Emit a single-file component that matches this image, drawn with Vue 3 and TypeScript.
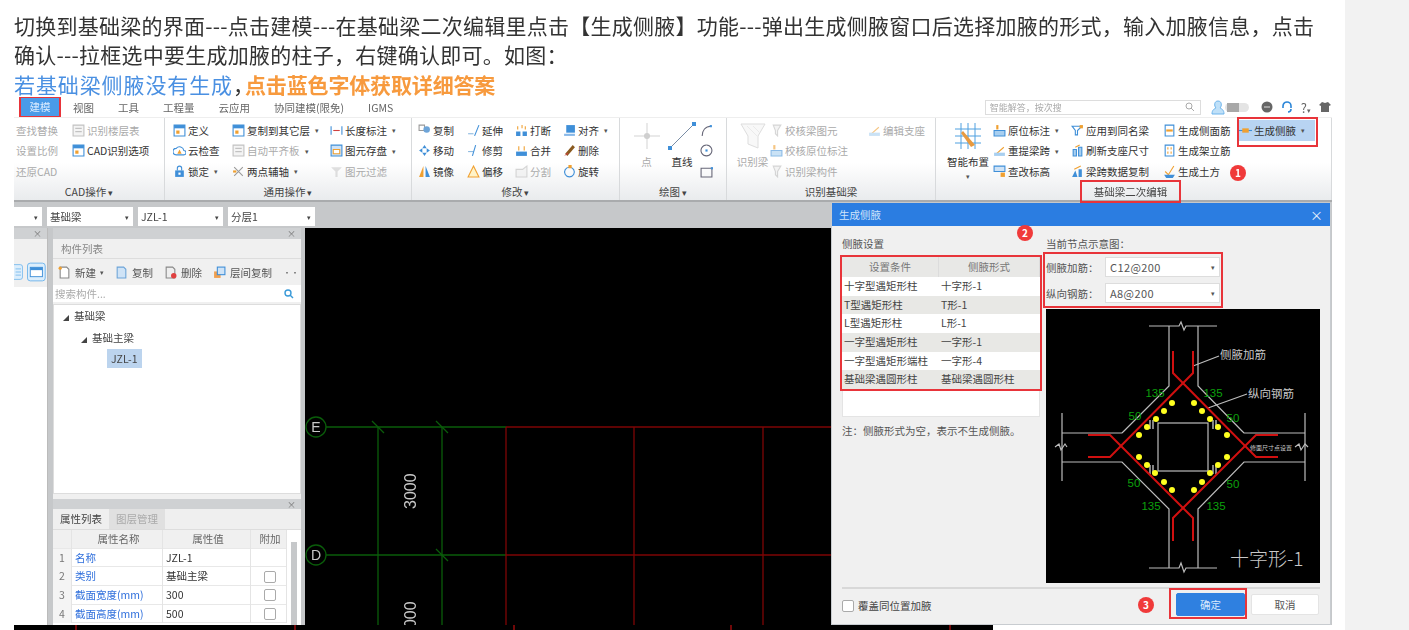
<template>
  <div class="page">
    <main class="article">
      <div class="copy">
        <p>切换到基础梁的界面---点击建模---在基础梁二次编辑里点击【生成侧腋】功能---弹出生成侧腋窗口后选择加腋的形式，输入加腋信息，点击</p>
        <p>确认---拉框选中要生成加腋的柱子，右键确认即可。如图：</p>
        <p><span class="link">若基础梁侧腋没有生成</span><span class="comma">，</span><b class="hint">点击蓝色字体获取详细答案</b></p>
      </div>

      <div class="shot">
        <!-- 顶部菜单 -->
        <div class="menu">
          <span v-for="tab in tabs" :key="tab" class="tab" :class="{ on: tab === '建模' }">{{ tab }}</span>
          <div class="tools">
            <div class="search-top">
              <span>智能解答，按次搜</span>
              <svg viewBox="0 0 10 10" class="i10"><circle cx="4" cy="4" r="3" fill="none" stroke="#aaa" /><path d="M6 6l3 3" stroke="#aaa" /></svg>
            </div>
            <svg viewBox="0 0 44 16" class="avatar">
              <path d="M3 15c0-4 2-5 4-6-2-2-2-7 2-7s4 5 2 7c2 1 4 2 4 6z" fill="#bfe0f8" stroke="#6db4ec" />
              <rect x="16" y="4" width="24" height="9" rx="4.5" fill="#e4e4e4" />
              <rect x="18" y="4" width="12" height="9" fill="#a8a8a8" />
            </svg>
            <svg viewBox="0 0 12 12" class="i12"><circle cx="6" cy="6" r="5.5" fill="#666" /><path d="M3 6h6" stroke="#ddd" /></svg>
            <svg viewBox="0 0 12 12" class="i12"><path d="M2 7V5a4 4 0 0 1 8 0v2M7 11c2 0 3-1 3-3" fill="none" stroke="#2c86d8" stroke-width="1.6" /></svg>
            <span class="qm">?<small>▾</small></span>
            <svg viewBox="0 0 12 12" class="i12"><path d="M3 1l3 1 3-1 3 3-2 1v6H2V5L0 4z" fill="#666" /></svg>
          </div>
        </div>

        <!-- 功能区 -->
        <div class="ribbon">
          <section v-for="group in groups" :key="group.name" class="group" :style="{ width: group.w + 'px' }">
            <div class="cols" :style="{ paddingLeft: group.pad + 'px' }">
              <div v-for="(col, ci) in group.cols" :key="ci" class="col" :style="{ width: col.w + 'px' }">
                <template v-if="col.big">
                  <div class="big" :class="{ off: col.off }">
                    <svg viewBox="0 0 30 30" class="big-ic">
                      <path v-for="(p, pi) in bigIcons[col.big]" :key="pi" :d="p.d" :fill="p.fill" :stroke="p.stroke" />
                    </svg>
                    <span>{{ col.label }}</span>
                    <small v-if="col.arrow">▾</small>
                  </div>
                </template>
                <template v-else>
                  <div v-for="item in col.items" :key="item.t" class="item" :class="{ off: item.off, cur: item.cur }">
                    <svg v-if="item.i" viewBox="0 0 12 12" class="i13">
                      <path v-for="(p, pi) in icons[item.i]" :key="pi" :d="p.d" :fill="p.fill" :stroke="p.stroke" />
                    </svg>
                    <span>{{ item.t }}</span>
                    <small v-if="item.a">▾</small>
                  </div>
                </template>
              </div>
            </div>
            <div class="glabel" :class="{ marked: group.marked }">{{ group.name }}<small v-if="!group.noArrow"> ▾</small></div>
          </section>
          <span class="red-box cur-box"></span>
          <span class="badge b1">1</span>
        </div>

        <!-- 下拉条 -->
        <div class="combos">
          <div v-for="c in combos" :key="c.t" class="combo" :style="{ width: c.w + 'px' }">
            <span>{{ c.t }}</span><small>▾</small>
          </div>
        </div>

        <div class="work">
          <aside class="side-left">
            <div class="bar"><i>×</i></div>
            <div class="left-tools">
              <svg viewBox="0 0 12 20" class="mode"><rect x="-8" y=".5" width="19" height="19" rx="3" fill="#dceefc" stroke="#6db4ec" /><path d="M2 6h7M2 10h7M2 14h7" stroke="#6db4ec" /></svg>
              <svg viewBox="0 0 20 20" class="mode wide"><rect x=".5" y=".5" width="19" height="19" rx="3" fill="#dceefc" stroke="#6db4ec" /><rect x="3.5" y="5" width="13" height="10" fill="#fff" stroke="#3f8fd8" /><path d="M3.5 5h13v3h-13z" fill="#3f8fd8" /></svg>
            </div>
          </aside>

          <div class="side-mid">
            <div class="bar"><i>×</i></div>
            <div class="ptitle">构件列表</div>
            <div class="ptools">
              <span><svg viewBox="0 0 12 12" class="i13"><path d="M2 1h6l2 2v8H2z" fill="#fff" stroke="#888" /><circle cx="2" cy="2" r="1.5" fill="#f0a030" /></svg>新建 <small>▾</small></span>
              <span><svg viewBox="0 0 12 12" class="i13"><path d="M2 1h6l2 2v8H2z" fill="#cfe3f6" stroke="#6da4d8" /></svg>复制</span>
              <span><svg viewBox="0 0 12 12" class="i13"><path d="M2 1h6l2 2v8H2z" fill="#eee" stroke="#888" /><circle cx="9" cy="9" r="2.5" fill="#e04040" /></svg>删除</span>
              <span><svg viewBox="0 0 12 12" class="i13"><rect x="1" y="5" width="6" height="6" fill="#f0a050" /><rect x="4" y="1" width="7" height="7" fill="#cfe3f6" stroke="#3f8fd8" /></svg>层间复制</span>
              <em>••</em>
            </div>
            <div class="psearch">
              <span>搜索构件...</span>
              <svg viewBox="0 0 10 10" class="i10"><circle cx="4" cy="4" r="3" fill="none" stroke="#3a9ad8" stroke-width="1.4" /><path d="M6 6l3 3" stroke="#3a9ad8" stroke-width="1.4" /></svg>
            </div>
            <div class="tree">
              <div class="node"><b>◢</b>基础梁</div>
              <div class="node n2"><b>◢</b>基础主梁</div>
              <div class="node n3"><span>JZL-1</span></div>
            </div>
            <div class="bar second"><i>×</i></div>
            <div class="ptabs"><span class="active">属性列表</span><span>图层管理</span></div>
            <div class="props">
              <div class="prow phead"><span></span><span>属性名称</span><span>属性值</span><span>附加</span></div>
              <div v-for="p in props" :key="p.n" class="prow">
                <span class="num">{{ p.n }}</span>
                <span class="pname">{{ p.k }}</span>
                <span class="pval">{{ p.v }}</span>
                <span class="pchk"><i v-if="p.c" class="chk"></i></span>
              </div>
              <span class="vscroll"></span>
            </div>
          </div>

          <!-- 绘图区 -->
          <svg class="canvas" viewBox="305 228 526 397">
            <g fill="none" stroke="#0a5c0a" stroke-width="1.3">
              <circle cx="316" cy="427" r="10" />
              <circle cx="316" cy="555" r="10" />
              <path d="M326 427H506M326 555H506M378 427V625M442 427V625" />
              <path d="M372 421l12 12M436 421l12 12M436 549l12 12" />
            </g>
            <g fill="none" stroke="#7d0505" stroke-width="1.3">
              <path d="M506 427H831M506 555H831M506 427V625M634 427V625M763 427V625" />
            </g>
            <g fill="#c8c8c8" font-family="'Liberation Sans', sans-serif">
              <text x="316" y="432" font-size="14" text-anchor="middle">E</text>
              <text x="316" y="560" font-size="14" text-anchor="middle">D</text>
              <text transform="translate(416 509) rotate(-90)" font-size="16">3000</text>
              <text transform="translate(416 637) rotate(-90)" font-size="16">3000</text>
            </g>
          </svg>
        </div>

        <svg class="band" viewBox="14 625 979 5">
          <rect x="14" y="625" width="979" height="5" fill="#000" />
          <path d="M76 625v5M295 625v5M514 625v5M731 625v5M950 625v5" stroke="#e01010" />
        </svg>

        <!-- 生成侧腋弹窗 -->
        <div class="dialog">
          <header class="dlg-title"><span>生成侧腋</span><i>×</i></header>
          <div class="dlg-body">
            <div class="dlg-left">
              <h4>侧腋设置</h4>
              <div class="rule-table">
                <div class="trow thead"><span>设置条件</span><span>侧腋形式</span></div>
                <div v-for="r in rules" :key="r[0]" class="trow"><span>{{ r[0] }}</span><span>{{ r[1] }}</span></div>
              </div>
              <div class="table-rest"></div>
              <p class="note">注：侧腋形式为空，表示不生成侧腋。</p>
            </div>
            <div class="dlg-right">
              <h4>当前节点示意图：</h4>
              <div class="fields">
                <div class="field"><label>侧腋加筋：</label><div class="dcombo"><span>C12@200</span><small>▾</small></div></div>
                <div class="field"><label>纵向钢筋：</label><div class="dcombo"><span>A8@200</span><small>▾</small></div></div>
              </div>
              <svg class="diagram" viewBox="1046 308 274 274">
                <rect x="1046" y="308" width="274" height="274" fill="#000" />
                <g fill="none" stroke="#bcbcbc" stroke-width="1.2">
                  <path d="M1149 325H1179l2-4 3 8 2-4H1217" />
                  <path d="M1169 325V385L1124 430 1122 432H1062M1198 325V385L1242 430 1244 432H1305" />
                  <path d="M1062 412V480M1305 412V480" />
                  <path d="M1062 461H1122L1169 508V567M1305 461H1244L1198 508V567" />
                  <path d="M1149 567H1179l2-5 3 9 2-4H1217" />
                  <path d="M1055 446l4-3 2 6 4-6 2 3M1295 446l4-3 2 6 4-6 3 3" />
                  <rect x="1158" y="422" width="50" height="48" />
                  <path d="M1150 419v9M1153 419v9M1213 419v9M1216 419v9M1150 464v9M1153 464v9M1213 464v9M1216 464v9" stroke="#ddd" />
                  <path d="M1193 365L1219 355M1208 407L1247 393" />
                </g>
                <g fill="none" stroke="#d01010" stroke-width="2">
                  <path d="M1173 350V372L1256 456H1278" />
                  <path d="M1193 350V372L1110 456H1088" />
                  <path d="M1173 540V517L1256 434H1278" />
                  <path d="M1193 540V517L1110 434H1088" />
                </g>
                <circle v-for="(d, di) in dots" :key="di" :cx="d[0]" :cy="d[1]" r="3" fill="#ffff20" />
                <g fill="#0ca00c" font-size="11.5" font-family="'Liberation Sans', sans-serif">
                  <text v-for="(g, gi) in greens" :key="gi" :x="g[0]" :y="g[1]" text-anchor="middle">{{ g[2] }}</text>
                </g>
                <g fill="#c8c8c8" font-family="'Noto Sans CJK SC', sans-serif">
                  <text x="1220" y="358" font-size="11.5">侧腋加筋</text>
                  <text x="1248" y="397" font-size="11.5">纵向钢筋</text>
                  <text x="1250" y="449" font-size="6">修面尺寸点设置</text>
                </g>
                <text x="1230" y="565" fill="#c8c8c8" font-size="19" font-weight="300" font-family="'Noto Sans CJK SC', sans-serif">十字形-1</text>
              </svg>
            </div>
          </div>
          <footer class="dlg-foot">
            <label class="cover"><i class="chk"></i>覆盖同位置加腋</label>
            <span class="badge b3">3</span>
            <span class="ok-wrap"><button class="btn primary">确定</button></span>
            <button class="btn cancel">取消</button>
          </footer>
          <span class="badge b2">2</span>
        </div>
      </div>
    </main>
    <div class="rail"></div>
  </div>
</template>

<script setup lang="ts">
interface P {
  d: string;
  fill?: string;
  stroke?: string;
}
interface Item {
  t: string;
  i?: string;
  a?: boolean;
  off?: boolean;
  cur?: boolean;
}
interface Col {
  w: number;
  items?: Item[];
  big?: string;
  label?: string;
  arrow?: boolean;
  off?: boolean;
}
interface Group {
  name: string;
  w: number;
  pad: number;
  cols: Col[];
  marked?: boolean;
  noArrow?: boolean;
}

const tabs = ["建模", "视图", "工具", "工程量", "云应用", "协同建模(限免)", "IGMS"];

const B = "#3f8fd8";
const O = "#f0a030";
const G = "#9a9a9a";

// 工具栏小图标
const icons: Record<string, P[]> = {
  table: [{ d: "M1 1h10v10H1z", fill: "#fff", stroke: B }, { d: "M1 1h10v3H1z", fill: B }, { d: "M3 6h3v3H3z", fill: O }],
  gray: [{ d: "M1 1h10v10H1z", fill: "#eee", stroke: G }, { d: "M3 4h6M3 7h6", stroke: G }],
  cloud: [{ d: "M3 10a3 3 0 0 1 0-6 4 4 0 0 1 7 2 2 2 0 0 1 0 4z", fill: "#fff", stroke: B }, { d: "M6 5l2 4H4z", fill: O }],
  lock: [{ d: "M2 5h8v6H2z", fill: B }, { d: "M4 5V3a2 2 0 0 1 4 0v2", fill: "none", stroke: B }, { d: "M5 7h2v2H5z", fill: "#fff" }],
  axis: [{ d: "M2 2l8 8M2 10l8-8", stroke: G }, { d: "M1 5h3v2H1z", fill: O }],
  dim: [{ d: "M1 2v8M11 2v8", stroke: B }, { d: "M3 6h6", stroke: "#d04040" }],
  save: [{ d: "M1 1h10v10H1z", fill: "#cfe3f6", stroke: B }, { d: "M3 5h6v4H3z", fill: "#fff", stroke: O }],
  filter: [{ d: "M1 2h10L7 6v5H5V6z", fill: "#ccc" }],
  copy: [{ d: "M1 1h5v5H1z", fill: "none", stroke: G }, { d: "M5 5a3 3 0 1 0 6 0 3 3 0 1 0-6 0z", fill: "#6da4d8" }],
  ext: [{ d: "M1 9h5", stroke: "#8ab8e0", fill: "none" }, { d: "M7 11l4-10", stroke: B, fill: "none" }],
  brk: [{ d: "M1 7h4v4H1zM7 7h4v4H7z", fill: B }, { d: "M2 2h1v3H2zM6 1h1v3H6zM9 2h1v3H9z", fill: O }],
  align: [{ d: "M3 1h8v7H3z", fill: B }, { d: "M1 9h10v2H1z", fill: "#88b8e8" }],
  move: [{ d: "M6 1l2 3H4zM6 11L4 8h4zM1 6l3-2v4zM11 6L8 8V4z", fill: B }],
  trim: [{ d: "M1 7h5", stroke: "#8ab8e0", fill: "none" }, { d: "M5 11l3-10", stroke: B, fill: "none" }],
  merge: [{ d: "M1 7h10v4H1z", fill: B }, { d: "M3 2h1v4H3zM8 2h1v4H8z", fill: O }],
  del: [{ d: "M2 9l7-8 2 2-7 8z", fill: "#8a5a20" }, { d: "M1 11l3-3 1 1z", fill: "#d04040" }],
  mirror: [{ d: "M5 1v10H1z", fill: O }, { d: "M7 1v10h4z", fill: B }],
  offset: [{ d: "M6 1l5 10H1z", fill: "#fff3c8", stroke: O }],
  split: [{ d: "M1 11V4h6l4-3v10z", fill: "#eee", stroke: "#bbb" }],
  rotate: [{ d: "M6 2a4.5 4.5 0 1 1-.1 0", fill: "none", stroke: B }, { d: "M5 0h3v3H5z", fill: O }],
  chk: [{ d: "M3 1h7L7 6v5L5 9V6z", fill: "#eee", stroke: "#bbb" }],
  mark: [{ d: "M3 1h2v4H3z", fill: O }, { d: "M1 6h10v5H1z", fill: "#a8cff0", stroke: B }],
  line: [{ d: "M2 10L10 3", stroke: O, fill: "none" }, { d: "M1 8h10v3H1z", fill: "#a8cff0" }],
  level: [{ d: "M1 1h10v5H1z", fill: "#cfe3f6", stroke: B }, { d: "M7 7h4v4H7z", fill: O }],
  same: [{ d: "M1 2h9L6 6v4H4V6z", fill: "#fff", stroke: B }, { d: "M8 1h3v3H8z", fill: O }],
  brush: [{ d: "M2 11V5h3v6zM7 11V3h3v8z", fill: "#a8cff0", stroke: B }, { d: "M4 3l4-2", stroke: O }],
  cp: [{ d: "M1 11l3-6 2 6zM7 11V4h3v7z", fill: B }, { d: "M3 4l6-3", stroke: O, fill: "none" }],
  side: [{ d: "M2 1h8v10H2z", fill: "#fff", stroke: B }, { d: "M3 5h6v2H3z", fill: O }],
  erect: [{ d: "M2 1h8v10H2z", fill: "#fff", stroke: B }, { d: "M4 3h1v2H4zM7 3h1v2H7zM4 7h1v2H4zM7 7h1v2H7z", fill: O }],
  earth: [{ d: "M2 6l3 3 5-8", stroke: O, fill: "none" }, { d: "M1 9h10l-2 3H3z", fill: B }],
  haunch: [{ d: "M0 6h12", stroke: B, fill: "none" }, { d: "M3 4h6v4H3z", fill: O }],
  arc: [{ d: "M2 11C2 6 5 2 10 2", fill: "none", stroke: "#667" }, { d: "M9 1h2v2H9z", fill: B }],
  circle: [{ d: "M6 1a5 5 0 1 1-.1 0", fill: "none", stroke: "#667" }, { d: "M5 5h2v2H5z", fill: B }],
  rect: [{ d: "M1 3h10v8H1z", fill: "none", stroke: "#667" }, { d: "M10 2h2v2h-2z", fill: B }],
};

const bigIcons: Record<string, P[]> = {
  point: [{ d: "M15 2v26M2 15h26", stroke: "#b8b8b8", fill: "none" }, { d: "M12 15a3 3 0 1 0 6 0 3 3 0 1 0-6 0z", fill: "#b0b0b0" }],
  line: [{ d: "M3 27L27 3", stroke: "#7a8da5", fill: "none" }, { d: "M1 25h4v4H1zM25 1h4v4h-4z", fill: B }],
  funnel: [{ d: "M3 3h24l-7 12v12l-10-4V15z", fill: "#f4f4f4", stroke: "#c8c8c8" }, { d: "M9 5l10 10M15 5l6 6", stroke: "#ddd" }],
  smart: [{ d: "M8 2v26M15 2v26M22 2v26M2 8h26M2 15h26M2 22h26", stroke: "#4fa0e0", fill: "none" }, { d: "M10 10l12 14-4 2L8 12z", fill: "#e89a40" }],
};

const groups: Group[] = [
  {
    name: "CAD操作",
    w: 151,
    pad: 2,
    cols: [
      { w: 56, items: [{ t: "查找替换", off: true }, { t: "设置比例", off: true }, { t: "还原CAD", off: true }] },
      { w: 90, items: [{ t: "识别楼层表", i: "gray", off: true }, { t: "CAD识别选项", i: "table" }] },
    ],
  },
  {
    name: "通用操作",
    w: 247,
    pad: 8,
    cols: [
      { w: 59, items: [{ t: "定义", i: "table" }, { t: "云检查", i: "cloud" }, { t: "锁定", i: "lock", a: true }] },
      { w: 98, items: [{ t: "复制到其它层", i: "table", a: true }, { t: "自动平齐板", i: "gray", a: true, off: true }, { t: "两点辅轴", i: "axis", a: true }] },
      { w: 80, items: [{ t: "长度标注", i: "dim", a: true }, { t: "图元存盘", i: "save", a: true }, { t: "图元过滤", i: "filter", off: true }] },
    ],
  },
  {
    name: "修改",
    w: 208,
    pad: 6,
    cols: [
      { w: 49, items: [{ t: "复制", i: "copy" }, { t: "移动", i: "move" }, { t: "镜像", i: "mirror" }] },
      { w: 48, items: [{ t: "延伸", i: "ext" }, { t: "修剪", i: "trim" }, { t: "偏移", i: "offset" }] },
      { w: 48, items: [{ t: "打断", i: "brk" }, { t: "合并", i: "merge" }, { t: "分割", i: "split", off: true }] },
      { w: 55, items: [{ t: "对齐", i: "align", a: true }, { t: "删除", i: "del" }, { t: "旋转", i: "rotate" }] },
    ],
  },
  {
    name: "绘图",
    w: 107,
    pad: 9,
    cols: [
      { w: 35, big: "point", label: "点", off: true },
      { w: 36, big: "line", label: "直线" },
      { w: 20, items: [{ t: "", i: "arc" }, { t: " ", i: "circle" }, { t: "  ", i: "rect" }] },
    ],
  },
  {
    name: "识别基础梁",
    w: 209,
    pad: 8,
    noArrow: true,
    cols: [
      { w: 35, big: "funnel", label: "识别梁", off: true },
      { w: 98, items: [{ t: "校核梁图元", i: "chk", off: true }, { t: "校核原位标注", i: "mark", off: true }, { t: "识别梁构件", i: "chk", off: true }] },
      { w: 60, items: [{ t: "编辑支座", i: "line", off: true }] },
    ],
  },
  {
    name: "基础梁二次编辑",
    w: 396,
    pad: 7,
    marked: true,
    noArrow: true,
    cols: [
      { w: 50, big: "smart", label: "智能布置", arrow: true },
      { w: 78, items: [{ t: "原位标注", i: "mark", a: true }, { t: "重提梁跨", i: "line", a: true }, { t: "查改标高", i: "level" }] },
      { w: 92, items: [{ t: "应用到同名梁", i: "same" }, { t: "刷新支座尺寸", i: "brush" }, { t: "梁跨数据复制", i: "cp" }] },
      { w: 77, items: [{ t: "生成侧面筋", i: "side" }, { t: "生成架立筋", i: "erect" }, { t: "生成土方", i: "earth" }] },
      { w: 78, items: [{ t: "生成侧腋", i: "haunch", a: true, cur: true }] },
    ],
  },
];

const combos = [
  { t: " ", w: 28 },
  { t: "基础梁", w: 86 },
  { t: "JZL-1", w: 85 },
  { t: "分层1", w: 87 },
];

const props = [
  { n: 1, k: "名称", v: "JZL-1", c: false },
  { n: 2, k: "类别", v: "基础主梁", c: true },
  { n: 3, k: "截面宽度(mm)", v: "300", c: true },
  { n: 4, k: "截面高度(mm)", v: "500", c: true },
];

const rules = [
  ["十字型遇矩形柱", "十字形-1"],
  ["T型遇矩形柱", "T形-1"],
  ["L型遇矩形柱", "L形-1"],
  ["一字型遇矩形柱", "一字形-1"],
  ["一字型遇矩形端柱", "一字形-4"],
  ["基础梁遇圆形柱", "基础梁遇圆形柱"],
];

const dots = [
  [1172, 402], [1164, 410], [1156, 418], [1147, 426], [1139, 434],
  [1194, 402], [1202, 410], [1210, 418], [1218, 426], [1227, 434],
  [1139, 456], [1147, 464], [1155, 472], [1164, 481], [1172, 489],
  [1227, 456], [1218, 464], [1210, 472], [1202, 481], [1194, 489],
];

const greens: [number, number, string][] = [
  [1155, 396, "135"], [1213, 396, "135"],
  [1135, 419, "50"], [1233, 421, "50"],
  [1134, 486, "50"], [1233, 487, "50"],
  [1151, 509, "135"], [1216, 509, "135"],
];
</script>

<style>
html,
body {
  background: #fff;
}
</style>

<style scoped>
.page {
  display: flex;
  width: 1409px;
  height: 630px;
  overflow: hidden;
  background: #fff;
  font-family: "Noto Sans CJK SC", "Liberation Sans", sans-serif;
  color: #333;
}
.article {
  width: 1345px;
  flex: none;
}
.rail {
  flex: 1;
  background: #f2f2f2;
}
.copy {
  height: 97px;
  padding: 11px 0 0 14px;
  box-sizing: border-box;
  font-size: 21px;
  letter-spacing: 0.25px;
  line-height: 29.3px;
  filter: blur(0.5px);
  white-space: nowrap;
}
.copy p {
  margin: 0;
}
.link {
  color: #4a90e2;
  letter-spacing: 0.9px;
}
.comma {
  letter-spacing: -9px;
}
.hint {
  color: #f79a3e;
  letter-spacing: -0.15px;
}

/* 截图区，原图本身是模糊的 */
.shot {
  position: relative;
  width: 1318px;
  height: 533px;
  margin-left: 14px;
  overflow: hidden;
  font-size: 10.5px;
  filter: blur(0.7px);
}
.menu {
  display: flex;
  align-items: center;
  height: 20px;
  padding-left: 6px;
  color: #666;
  background: #fff;
}
.tab {
  margin-right: 24px;
  white-space: nowrap;
}
.tab.on {
  width: 40px;
  height: 20px;
  margin-right: 13px;
  line-height: 20px;
  text-align: center;
  color: #dcecff;
  background: #4a9be8;
  outline: 2px solid #e8343a;
  outline-offset: -1px;
}
.tools {
  display: flex;
  align-items: center;
  gap: 8px;
  margin-left: auto;
  margin-right: 1px;
}
.search-top {
  display: flex;
  align-items: center;
  justify-content: space-between;
  width: 216px;
  height: 15px;
  padding: 0 5px 0 4px;
  box-sizing: border-box;
  border: 1px solid #ddd;
  color: #aaa;
  font-size: 9px;
}
.i10 {
  width: 10px;
  height: 10px;
  flex: none;
}
.i12 {
  width: 12px;
  height: 12px;
  flex: none;
}
.i13 {
  width: 13px;
  height: 13px;
  flex: none;
}
.avatar {
  width: 44px;
  height: 16px;
}
.qm {
  color: #666;
  font-size: 13px;
}
.qm small {
  font-size: 7px;
}
.ribbon {
  position: relative;
  display: flex;
  height: 85px;
  background: linear-gradient(#fff 55%, #e9ebed);
  border-top: 1px solid #eee;
  border-bottom: 2px solid #a9abad;
  box-sizing: border-box;
}
.group {
  display: flex;
  flex-direction: column;
  flex: none;
  box-sizing: border-box;
  border-right: 1px solid #d8dadc;
}
.cols {
  display: flex;
  height: 64px;
  padding-top: 2px;
}
.col {
  flex: none;
}
.item {
  display: flex;
  align-items: center;
  gap: 2px;
  height: 20.5px;
  white-space: nowrap;
  color: #333;
}
.item small,
.big small {
  font-size: 7px;
  margin-left: 3px;
  color: #555;
}
.off {
  color: #aaa;
}
.off svg {
  opacity: 0.6;
}
.item.off {
  color: #aaa;
}
.item.cur {
  width: 76px;
  margin-left: -1px;
  background: #b8d4f2;
}
.big {
  display: flex;
  flex-direction: column;
  align-items: center;
  line-height: 14px;
}
.big.off {
  color: #aaa;
}
.big-ic {
  width: 30px;
  height: 30px;
  margin: 1px 0 4px;
}
.big small {
  margin: 0;
}
.glabel {
  height: 17px;
  line-height: 17px;
  text-align: center;
  color: #444;
}
.glabel.marked {
  width: 99px;
  height: 21px;
  margin: -2px 0 0 145px;
  line-height: 21px;
  outline: 2px solid #e8343a;
  outline-offset: -1px;
  position: relative;
  z-index: 2;
}
.red-box {
  position: absolute;
  outline: 2px solid #e8343a;
  outline-offset: -1px;
  pointer-events: none;
}
.cur-box {
  left: 1224px;
  top: 0;
  width: 79px;
  height: 28px;
}
.badge {
  position: absolute;
  width: 16px;
  height: 16px;
  line-height: 16px;
  border-radius: 50%;
  text-align: center;
  font-size: 10px;
  font-weight: 700;
  color: #fff;
  background: #f03a3a;
  z-index: 3;
}
.b1 {
  left: 1216px;
  top: 47px;
}
.combos {
  display: flex;
  gap: 5px;
  height: 26px;
  padding-top: 5px;
  box-sizing: border-box;
  background: #c6c8ca;
}
.combo {
  display: flex;
  align-items: center;
  justify-content: space-between;
  height: 19px;
  padding: 0 4px 0 3px;
  box-sizing: border-box;
  background: #fff;
  color: #444;
}
.combo small {
  font-size: 7px;
}
.work {
  display: flex;
  height: 397px;
  background: #c6c8ca;
}
.side-left {
  width: 34px;
  flex: none;
  background: #fff;
  border-right: 1px solid #bbb;
  box-sizing: border-box;
}
.bar {
  display: flex;
  justify-content: flex-end;
  align-items: center;
  height: 11px;
  padding-right: 5px;
  background: #cfd1d3;
  color: #777;
  font-size: 9px;
}
.bar i {
  font-style: normal;
}
.left-tools {
  display: flex;
  justify-content: flex-end;
  gap: 4px;
  height: 48px;
  padding: 23px 1px 0 0;
  box-sizing: border-box;
  background: #f0f0f0;
}
.mode {
  width: 10px;
  height: 20px;
}
.mode.wide {
  width: 20px;
}
.side-mid {
  width: 248px;
  flex: none;
  margin: 0 4px 0 5px;
  background: #f0f0f0;
  display: flex;
  flex-direction: column;
}
.ptitle {
  height: 19px;
  line-height: 19px;
  padding-left: 8px;
  color: #888;
  border-bottom: 1px solid #ddd;
}
.ptools {
  display: flex;
  align-items: center;
  gap: 11px;
  height: 26px;
  padding-left: 5px;
  color: #555;
  white-space: nowrap;
}
.ptools span {
  display: flex;
  align-items: center;
  gap: 4px;
}
.ptools small {
  font-size: 7px;
}
.ptools em {
  margin-left: auto;
  margin-right: 3px;
  font-size: 8px;
  font-style: normal;
}
.psearch {
  display: flex;
  justify-content: space-between;
  align-items: center;
  height: 17px;
  padding: 0 7px 0 2px;
  background: #fff;
  color: #aaa;
}
.tree {
  height: 190px;
  margin-top: 2px;
  background: #fff;
  border: 1px solid #ddd;
  box-sizing: border-box;
  color: #444;
}
.node {
  height: 21.5px;
  line-height: 21.5px;
  padding-left: 9px;
}
.node b {
  font-size: 6px;
  margin-right: 5px;
  color: #444;
}
.n2 {
  padding-left: 27px;
}
.n3 {
  padding-left: 53px;
}
.n3 span {
  display: inline-block;
  height: 19px;
  line-height: 19px;
  padding: 0 4px;
  background: #bcd4ee;
}
.second {
  margin-top: 5px;
  height: 10px;
}
.ptabs {
  display: flex;
  height: 20px;
  background: #efefef;
  border-bottom: 1px solid #ddd;
}
.ptabs span {
  padding: 0 7px;
  line-height: 20px;
  background: #e0e0e0;
  color: #aaa;
}
.ptabs .active {
  background: #efefef;
  color: #444;
}
.props {
  position: relative;
  flex: 1;
  background: #fff;
  overflow: hidden;
  padding-right: 14px;
}
.prow {
  display: grid;
  grid-template-columns: 19px 91px 88px 36px;
  height: 18.7px;
  line-height: 18.7px;
  border-bottom: 1px solid #e8e8e8;
  box-sizing: border-box;
}
.prow > span {
  border-right: 1px solid #e4e4e4;
  padding-left: 3px;
  white-space: nowrap;
}
.phead {
  background: #f0f0f0;
  color: #666;
}
.phead > span {
  text-align: center;
}
.num {
  color: #777;
  background: #f4f4f4;
  padding-left: 6px !important;
}
.pname {
  color: #2f6fdc;
}
.pchk {
  display: flex;
  justify-content: center;
  align-items: center;
}
.chk {
  display: inline-block;
  width: 12px;
  height: 12px;
  box-sizing: border-box;
  border: 1px solid #aaa;
  border-radius: 2px;
  background: #fff;
}
.vscroll {
  position: absolute;
  top: 12px;
  right: 4px;
  bottom: 0;
  width: 6px;
  background: #c6c8ca;
}
.canvas {
  display: block;
  width: 526px;
  height: 397px;
  flex: none;
  background: #000;
}
.band {
  display: block;
  width: 979px;
  height: 5px;
}

/* 弹窗 */
.dialog {
  position: absolute;
  left: 817px;
  top: 106px;
  width: 500px;
  height: 422px;
  display: flex;
  flex-direction: column;
  box-sizing: border-box;
  background: #f0f0f0;
  color: #444;
  border: 1px solid #c8ccd0;
  border-top: 0;
  z-index: 4;
}
.dlg-title {
  display: flex;
  justify-content: space-between;
  align-items: center;
  height: 23px;
  flex: none;
  padding: 0 7px;
  background: #2b7de1;
  color: #cfe4fb;
}
.dlg-title i {
  font-style: normal;
  font-size: 13px;
  color: #e8f2fd;
}
.dlg-body {
  display: flex;
  gap: 6px;
  flex: 1;
  padding: 10px 10px 0;
}
.dlg-body h4 {
  margin: 0;
  height: 19px;
  line-height: 16px;
  font-weight: 400;
  font-size: 10.5px;
  color: #555;
}
.dlg-left {
  width: 198px;
  flex: none;
}
.rule-table {
  margin-top: 2px;
  background: #fff;
  outline: 2px solid #e8343a;
}
.trow {
  display: grid;
  grid-template-columns: 97px 1fr;
  height: 18.7px;
  line-height: 18.7px;
}
.trow > span {
  padding-left: 2px;
  white-space: nowrap;
}
.trow:nth-child(odd):not(.thead) {
  background: #e8e8e5;
}
.thead {
  height: 20px;
  line-height: 20px;
  background: #e8e8e6;
  color: #777;
}
.thead > span {
  text-align: center;
  padding: 0;
  border-right: 1px solid #dcdcdc;
}
.table-rest {
  height: 27px;
  margin-top: 1px;
  background: #fff;
  border: 1px solid #e4e4e4;
  box-sizing: border-box;
}
.note {
  margin: 7px 0 0;
  line-height: 14px;
  font-size: 10.5px;
  color: #555;
  white-space: nowrap;
}
.dlg-right {
  width: 274px;
  flex: none;
}
.fields {
  display: flex;
  flex-direction: column;
  gap: 6px;
  width: 174px;
  height: 50px;
  padding: 2px 0;
  box-sizing: border-box;
  outline: 2px solid #e8343a;
  outline-offset: 1px;
}
.field {
  display: flex;
  align-items: center;
  height: 20px;
}
.field label {
  width: 59px;
  flex: none;
  white-space: nowrap;
  color: #555;
}
.dcombo {
  display: flex;
  justify-content: space-between;
  align-items: center;
  width: 115px;
  height: 20px;
  padding: 0 4px;
  box-sizing: border-box;
  background: #fff;
  border: 1px solid #ddd;
  color: #555;
  font-size: 11px;
  letter-spacing: 0.4px;
}
.dcombo small {
  font-size: 7px;
}
.diagram {
  display: block;
  width: 274px;
  height: 274px;
  margin-top: 4px;
}
.dlg-foot {
  position: relative;
  display: flex;
  align-items: flex-start;
  height: 37px;
  flex: none;
  margin: 0 10px;
  padding-top: 1px;
  border-top: 2px solid #d8d8d8;
  box-sizing: border-box;
}
.cover {
  display: flex;
  align-items: center;
  gap: 4px;
  margin: 8px auto 0 0;
  color: #444;
}
.ok-wrap {
  display: block;
  height: 27px;
  padding: 3px 0 0 5px;
  box-sizing: border-box;
  outline: 2px solid #e8343a;
}
.btn {
  display: block;
  width: 69px;
  height: 23px;
  padding: 0;
  font: inherit;
  color: #555;
  background: #fff;
  border: 1px solid #e4e4e4;
  border-radius: 2px;
}
.primary {
  color: #d8e9fc;
  background: #2f80e0;
  border-color: #2f80e0;
}
.cancel {
  width: 68px;
  height: 21px;
  margin: 4px 1px 0 6px;
}
.b3 {
  left: 296px;
  top: 8px;
}
.b2 {
  left: 185px;
  top: 22px;
}
</style>
